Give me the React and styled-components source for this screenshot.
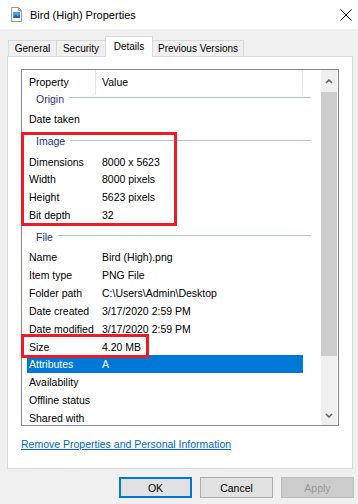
import React from 'react';
import styled, { createGlobalStyle } from 'styled-components';

const GlobalStyle = createGlobalStyle`
  html, body {
    margin: 0;
    padding: 0;
    background: #f0f0f0;
  }
  body {
    font-family: "Segoe UI", "Liberation Sans", Arial, sans-serif;
    font-size: 10.5px;
    color: #000;
  }
`;

const Window = styled.div`
  width: 358px;
  height: 504px;
  display: flex;
  flex-direction: column;
  background: #f0f0f0;
  overflow: hidden;
`;

const TitleBar = styled.div`
  height: 29px;
  flex-shrink: 0;
  box-sizing: border-box;
  background: #fff;
  display: flex;
  align-items: center;
  padding: 0 6px 0 11px;
`;

const Title = styled.span`
  flex: 1;
  margin-left: 8px;
  font-size: 11px;
  line-height: 14px;
`;

const Body = styled.div`
  display: flex;
  flex-direction: column;
  padding: 7px 5px 0 7px;
`;

const TabStrip = styled.div`
  display: flex;
  align-items: flex-start;
  height: 21px;
  margin: 0 0 -1px 1px;
  position: relative;
  z-index: 1;
`;

const Tab = styled.div`
  box-sizing: border-box;
  width: ${p => p.$w}px;
  height: ${p => (p.$active ? 21 : 16)}px;
  margin-top: ${p => (p.$active ? 0 : 4)}px;
  border: 1px solid #d9d9d9;
  border-bottom: none;
  background: ${p => (p.$active ? '#fff' : '#f0f0f0')};
  position: relative;
  z-index: ${p => (p.$active ? 2 : 1)};
  display: flex;
  align-items: center;
  justify-content: center;
  font-size: 10px;
  padding-bottom: ${p => (p.$active ? 1 : 0)}px;

  & + & {
    margin-left: -1px;
  }
`;

const Panel = styled.div`
  box-sizing: border-box;
  height: 413px;
  border: 1px solid #d9d9d9;
  background: #fff;
  padding: 12px 0 0 13px;
`;

const ListView = styled.div`
  position: relative;
  box-sizing: border-box;
  width: 318px;
  height: 357px;
  border: 1px solid #828790;
  background: #fff;
  display: flex;
`;

const Content = styled.div`
  width: 299px;
  display: flex;
  flex-direction: column;
  overflow: hidden;
`;

const Header = styled.div`
  height: 25px;
  flex-shrink: 0;
  display: flex;
`;

const HeaderCell = styled.div`
  box-sizing: border-box;
  width: ${p => p.$w}px;
  height: 25px;
  padding: 0 0 2px ${p => p.$pad}px;
  border-right: 1px solid #e5e5e5;
  display: flex;
  align-items: center;
`;

const Viewport = styled.div`
  flex: 1;
  overflow: hidden;
`;

const Rows = styled.div`
  display: flex;
  flex-direction: column;
`;

const GroupHeader = styled.div`
  box-sizing: border-box;
  height: 24.4px;
  flex-shrink: 0;
  display: flex;
  align-items: center;
  padding: 1.2px 10px 0 14px;
  color: #1e3287;
`;

const GroupLine = styled.div`
  flex: 1;
  height: 1px;
  margin: -2px 0 0 5px;
  background: #aec2e3;
`;

const Row = styled.div`
  box-sizing: border-box;
  height: 17.85px;
  flex-shrink: 0;
  width: 276px;
  margin-left: 5px;
  padding-left: 2px;
  display: grid;
  grid-template-columns: 73px 1fr;
  align-items: center;
  white-space: nowrap;
  background: ${p => (p.$selected ? '#0078d7' : 'transparent')};
  color: ${p => (p.$selected ? '#fff' : '#000')};
`;

const Scrollbar = styled.div`
  width: 16px;
  margin-right: 1px;
  display: flex;
  flex-direction: column;
  background: #f0f0f0;
`;

const ScrollButton = styled.div`
  height: ${p => p.$h}px;
  flex-shrink: 0;
  display: flex;
  align-items: center;
  justify-content: center;
`;

const Thumb = styled.div`
  height: 264px;
  flex-shrink: 0;
  background: #cdcdcd;
`;

const Track = styled.div`
  flex: 1;
`;

const Mark = styled.div`
  position: absolute;
  box-sizing: border-box;
  left: ${p => p.$x}px;
  top: ${p => p.$y}px;
  width: ${p => p.$w}px;
  height: ${p => p.$h}px;
  border: 3px solid #ed1c24;
  pointer-events: none;
`;

const Link = styled.a`
  display: inline-block;
  align-self: flex-start;
  margin-top: 12px;
  line-height: 13px;
  color: #0066cc;
  text-decoration: underline;
  cursor: pointer;
`;

const ButtonRow = styled.div`
  display: flex;
  justify-content: flex-end;
  gap: 8px;
  padding: 8px 4px 0 0;
`;

const Button = styled.button`
  box-sizing: border-box;
  width: 73px;
  height: 21px;
  padding: 0;
  font-family: inherit;
  font-size: 10.5px;
  background: ${p => (p.$disabled ? '#cccccc' : '#e1e1e1')};
  color: ${p => (p.$disabled ? '#999' : '#000')};
  border: ${p => (p.$primary ? '2px solid #0078d7' : p.$disabled ? '1px solid #bfbfbf' : '1px solid #adadad')};
`;

const FileIcon = () => (
  <svg width="11" height="15" viewBox="0 0 11 15">
    <path d="M0.5 0.5H7.5L10.5 3.5V14.5H0.5Z" fill="#fff" stroke="#9a9a9a" />
    <path d="M7.5 0.5V3.5H10.5" fill="none" stroke="#9a9a9a" />
    <rect x="2" y="5" width="7" height="6" fill="#4a9be8" />
    <path d="M2 11L4.5 7.5L6.5 9.5L9 7.5V11Z" fill="#1a5fb4" />
  </svg>
);

const CloseIcon = () => (
  <svg width="12" height="12" viewBox="0 0 12 12">
    <path d="M0.5 0.5L11.5 11.5M11.5 0.5L0.5 11.5" stroke="#000" strokeWidth="1" />
  </svg>
);

const Chevron = ({ down }) => (
  <svg width="8" height="5" viewBox="0 0 8 5">
    <polyline
      points={down ? '1,1 4,4 7,1' : '1,4 4,1 7,4'}
      fill="none"
      stroke="#606060"
      strokeWidth="1.5"
    />
  </svg>
);

const groups = [
  { name: 'Origin', rows: [['Date taken', '']] },
  {
    name: 'Image',
    rows: [
      ['Dimensions', '8000 x 5623'],
      ['Width', '8000 pixels'],
      ['Height', '5623 pixels'],
      ['Bit depth', '32'],
    ],
  },
  {
    name: 'File',
    rows: [
      ['Name', 'Bird (High).png'],
      ['Item type', 'PNG File'],
      ['Folder path', 'C:\\Users\\Admin\\Desktop'],
      ['Date created', '3/17/2020 2:59 PM'],
      ['Date modified', '3/17/2020 2:59 PM'],
      ['Size', '4.20 MB'],
      ['Attributes', 'A'],
      ['Availability', ''],
      ['Offline status', ''],
      ['Shared with', ''],
    ],
  },
];

const tabs = [
  ['General', 49],
  ['Security', 50],
  ['Details', 48],
  ['Previous Versions', 92],
];

const scrollTop = 9;

export default function App() {
  return (
    <>
      <GlobalStyle />
      <Window>
        <TitleBar>
          <FileIcon />
          <Title>Bird (High) Properties</Title>
          <CloseIcon />
        </TitleBar>
        <Body>
          <TabStrip>
            {tabs.map(([label, w]) => (
              <Tab key={label} $w={w} $active={label === 'Details'}>
                {label}
              </Tab>
            ))}
          </TabStrip>
          <Panel>
            <ListView>
              <Content>
                <Header>
                  <HeaderCell $w={74} $pad={7}>Property</HeaderCell>
                  <HeaderCell $w={207} $pad={6}>Value</HeaderCell>
                </Header>
                <Viewport>
                  <Rows style={{ marginTop: -scrollTop }}>
                    {groups.map(g => (
                      <React.Fragment key={g.name}>
                        <GroupHeader>
                          {g.name}
                          <GroupLine />
                        </GroupHeader>
                        {g.rows.map(([k, v]) => (
                          <Row key={k} $selected={k === 'Attributes'}>
                            <span>{k}</span>
                            <span>{v}</span>
                          </Row>
                        ))}
                      </React.Fragment>
                    ))}
                  </Rows>
                </Viewport>
              </Content>
              <Scrollbar>
                <ScrollButton $h={22}>
                  <Chevron />
                </ScrollButton>
                <Thumb />
                <Track />
                <ScrollButton $h={19}>
                  <Chevron down />
                </ScrollButton>
              </Scrollbar>
              <Mark $x={-1} $y={62} $w={156} $h={94} />
              <Mark $x={-1} $y={264} $w={128} $h={24} />
            </ListView>
            <Link>Remove Properties and Personal Information</Link>
          </Panel>
        </Body>
        <ButtonRow>
          <Button $primary>OK</Button>
          <Button>Cancel</Button>
          <Button $disabled>Apply</Button>
        </ButtonRow>
      </Window>
    </>
  );
}
